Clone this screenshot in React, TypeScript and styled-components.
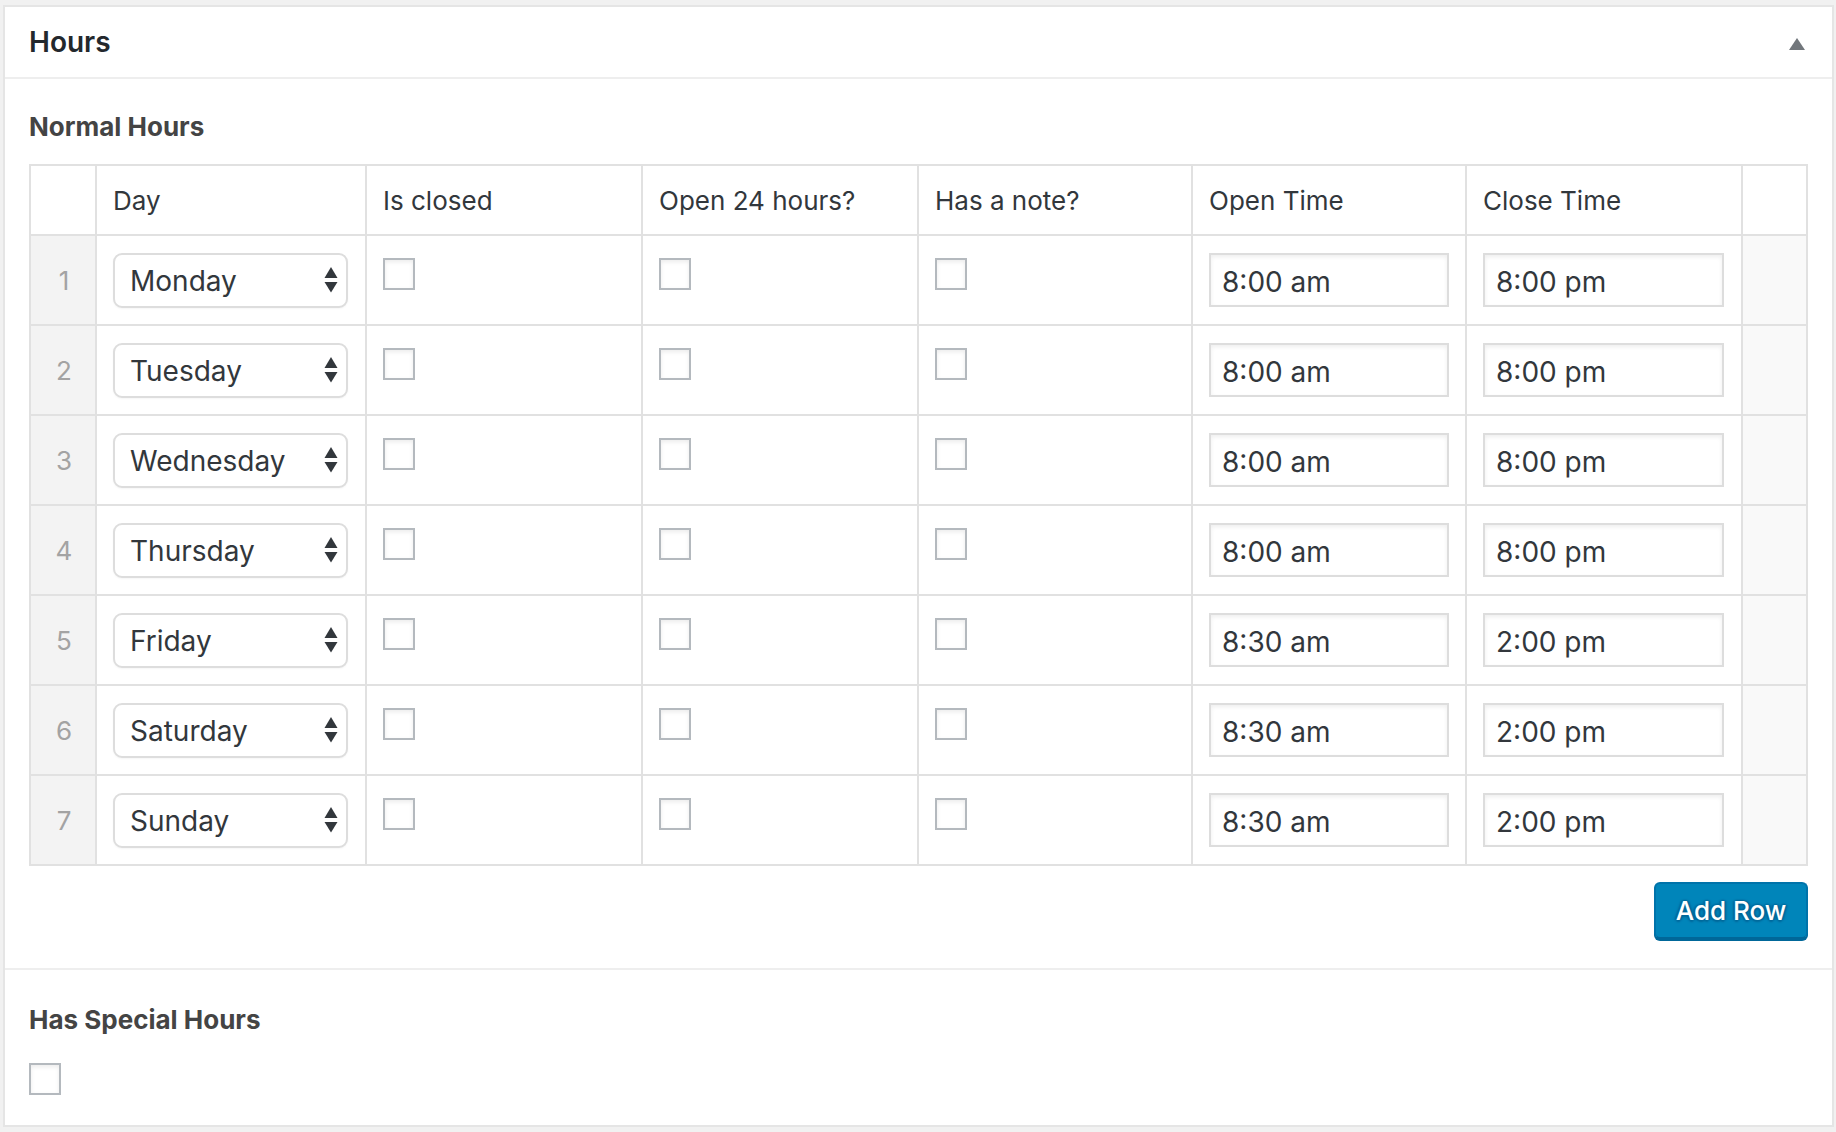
import React from "react";
import styled, { createGlobalStyle } from "styled-components";

const GlobalStyle = createGlobalStyle`
  html, body {
    margin: 0;
    padding: 0;
    background: #f1f1f1;
  }
  body {
    font-family: Inter, "Noto Sans", "Liberation Sans", sans-serif;
    color: #32373c;
  }
  * { box-sizing: border-box; }
`;

const Page = styled.div`
  padding: 5px 2px 0 3px;
  width: 1836px;
  height: 1132px;
`;

const Panel = styled.section`
  background: #ffffff;
  border: 2px solid #e5e5e5;
`;

const PanelHeader = styled.header`
  height: 72px;
  display: flex;
  align-items: center;
  justify-content: space-between;
  padding: 0 27px 0 24px;
  border-bottom: 2px solid #eeeeee;
`;

const PanelTitle = styled.h2`
  margin: 0;
  font-size: 28px;
  line-height: 34px;
  font-weight: 600;
  color: #23282d;
`;

const ToggleArrow = styled.button`
  border: 0;
  padding: 0;
  background: none;
  width: 16px;
  height: 12px;
  display: flex;
  margin-top: 4px;
`;

const Section = styled.div<{ $divider?: boolean }>`
  padding: ${(p) => (p.$divider ? "34px 24px 30px" : "32px 24px 29px")};
  border-top: ${(p) => (p.$divider ? "2px solid #eeeeee" : "0")};
`;

const SectionTitle = styled.h3<{ $gap: number }>`
  margin: 0 0 ${(p) => p.$gap}px;
  font-size: 26px;
  line-height: 32px;
  font-weight: 700;
  color: #444444;
`;

const Table = styled.div`
  display: grid;
  grid-template-columns: 66px 270px 276px 276px 274px 274px 276px 1fr;
  border-top: 2px solid #e1e1e1;
  border-left: 2px solid #e1e1e1;
  width: 100%;
`;

type CellKind = "head" | "num" | "field" | "check" | "handle";

const Cell = styled.div<{ $kind: CellKind }>`
  border-right: 2px solid #e1e1e1;
  border-bottom: 2px solid #e1e1e1;
  height: ${(p) => (p.$kind === "head" ? 70 : 90)}px;
  display: flex;
  align-items: ${(p) => (p.$kind === "check" ? "flex-start" : "center")};
  justify-content: ${(p) => (p.$kind === "num" ? "center" : "flex-start")};
  padding: ${(p) =>
    p.$kind === "check" ? "22px 16px 0" : p.$kind === "num" ? "0 0 0 2px" : "0 16px"};
  background: ${(p) =>
    p.$kind === "num" ? "#f3f3f3" : p.$kind === "handle" ? "#f9f9f9" : "#ffffff"};
`;

const HeadLabel = styled.span`
  font-size: 26px;
  line-height: 32px;
  color: #32373c;
  padding-top: 2px;
`;

const RowNumber = styled.span`
  font-size: 26px;
  line-height: 32px;
  color: #a3a3a3;
  padding-top: 2px;
`;

const SelectWrap = styled.div`
  width: 235px;
  height: 55px;
  border: 2px solid #dddddd;
  border-radius: 9px;
  background: #ffffff;
  box-shadow: 0 1px 2px rgba(0, 0, 0, 0.04);
  display: flex;
  align-items: center;
  padding: 0 8px 0 15px;
`;

const SelectControl = styled.select`
  appearance: none;
  -webkit-appearance: none;
  border: 0;
  outline: none;
  background: transparent;
  flex: 1;
  min-width: 0;
  font-family: inherit;
  font-size: 28px;
  color: #32373c;
  padding: 2px 0 0;
  height: 100%;
`;

const Checkbox = styled.input.attrs({ type: "checkbox" })`
  appearance: none;
  -webkit-appearance: none;
  display: block;
  margin: 0;
  width: 32px;
  height: 32px;
  border: 2px solid #b4b9be;
  background: #ffffff;
  box-shadow: inset 0 2px 4px rgba(0, 0, 0, 0.08);
`;

const TimeInput = styled.input.attrs({ type: "text" })<{ $width: number }>`
  width: ${(p) => p.$width}px;
  height: 54px;
  border: 2px solid #dddddd;
  box-shadow: inset 0 2px 4px rgba(0, 0, 0, 0.07);
  background: #ffffff;
  font-family: inherit;
  font-size: 28px;
  color: #32373c;
  padding: 3px 0 0 11px;
  outline: none;
`;

const Actions = styled.div`
  display: flex;
  justify-content: flex-end;
  margin-top: 16px;
`;

const PrimaryButton = styled.button`
  height: 57px;
  width: 154px;
  border: 2px solid #0073aa;
  border-bottom-color: #006799;
  border-radius: 6px;
  background: #0085ba;
  box-shadow: 0 2px 0 #006799;
  color: #ffffff;
  font-family: inherit;
  font-size: 26px;
  font-weight: 500;
  text-shadow: 0 -1px 2px #006799, 2px 0 2px #006799, 0 2px 2px #006799, -2px 0 2px #006799;
  padding: 0;
  cursor: pointer;
`;

const SelectArrows = () => (
  <svg width="14" height="26" viewBox="0 0 14 26" aria-hidden="true">
    <path d="M7 0 L13.5 11 L0.5 11 Z" fill="#32373c" />
    <path d="M0.5 15 L13.5 15 L7 25.5 Z" fill="#32373c" />
  </svg>
);

const days = [
  { day: "Monday", open: "8:00 am", close: "8:00 pm" },
  { day: "Tuesday", open: "8:00 am", close: "8:00 pm" },
  { day: "Wednesday", open: "8:00 am", close: "8:00 pm" },
  { day: "Thursday", open: "8:00 am", close: "8:00 pm" },
  { day: "Friday", open: "8:30 am", close: "2:00 pm" },
  { day: "Saturday", open: "8:30 am", close: "2:00 pm" },
  { day: "Sunday", open: "8:30 am", close: "2:00 pm" },
];

const dayNames = ["Monday", "Tuesday", "Wednesday", "Thursday", "Friday", "Saturday", "Sunday"];

const headers = ["Day", "Is closed", "Open 24 hours?", "Has a note?", "Open Time", "Close Time"];

export default function App() {
  return (
    <>
      <GlobalStyle />
      <Page>
        <Panel>
          <PanelHeader>
            <PanelTitle>Hours</PanelTitle>
            <ToggleArrow aria-label="Toggle panel">
              <svg width="16" height="12" viewBox="0 0 16 12">
                <path d="M8 0 L16 12 L0 12 Z" fill="#72777c" />
              </svg>
            </ToggleArrow>
          </PanelHeader>

          <Section>
            <SectionTitle $gap={21}>Normal Hours</SectionTitle>
            <Table>
              <Cell $kind="head" />
              {headers.map((h) => (
                <Cell $kind="head" key={h}>
                  <HeadLabel>{h}</HeadLabel>
                </Cell>
              ))}
              <Cell $kind="head" />
              {days.map((d, i) => (
                <React.Fragment key={d.day}>
                  <Cell $kind="num">
                    <RowNumber>{i + 1}</RowNumber>
                  </Cell>
                  <Cell $kind="field">
                    <SelectWrap>
                      <SelectControl defaultValue={d.day}>
                        {dayNames.map((n) => (
                          <option key={n} value={n}>
                            {n}
                          </option>
                        ))}
                      </SelectControl>
                      <SelectArrows />
                    </SelectWrap>
                  </Cell>
                  <Cell $kind="check">
                    <Checkbox />
                  </Cell>
                  <Cell $kind="check">
                    <Checkbox />
                  </Cell>
                  <Cell $kind="check">
                    <Checkbox />
                  </Cell>
                  <Cell $kind="field">
                    <TimeInput $width={240} defaultValue={d.open} />
                  </Cell>
                  <Cell $kind="field">
                    <TimeInput $width={241} defaultValue={d.close} />
                  </Cell>
                  <Cell $kind="handle" />
                </React.Fragment>
              ))}
            </Table>
            <Actions>
              <PrimaryButton>Add Row</PrimaryButton>
            </Actions>
          </Section>

          <Section $divider>
            <SectionTitle $gap={27}>Has Special Hours</SectionTitle>
            <Checkbox />
          </Section>
        </Panel>
      </Page>
    </>
  );
}
